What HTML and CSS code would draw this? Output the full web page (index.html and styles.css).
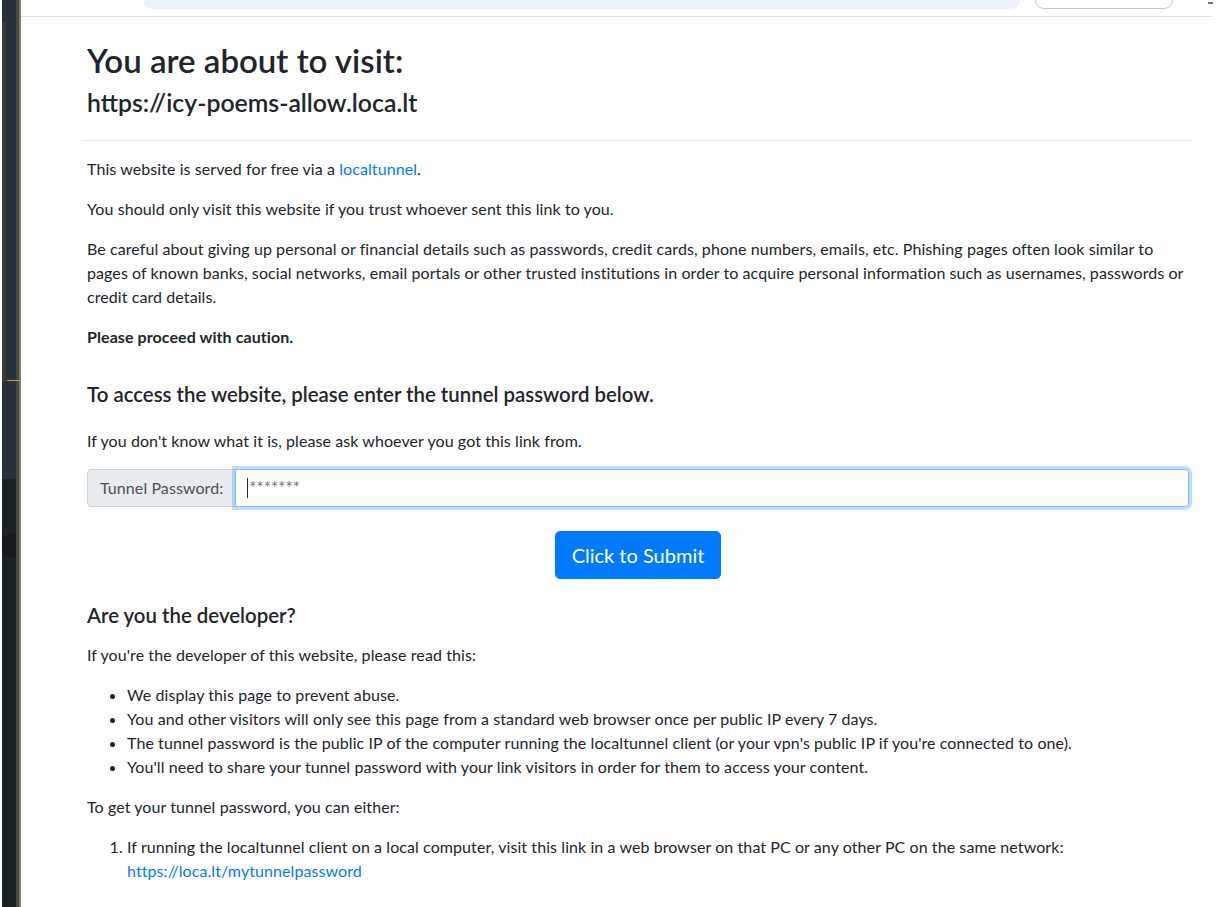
FILE: index.html
```
<!DOCTYPE html>
<html lang="en">
<head>
<meta charset="utf-8">
<title>localtunnel</title>
<link rel="stylesheet" href="styles.css">
</head>
<body>
<div class="window">
  <div class="rail"><span class="rail-tick"></span></div>
  <div class="main">
    <div class="chrome">
      <div class="omnibox"></div>
      <div class="chrome-btn"></div>
      <div class="chrome-spacer"></div>
      <div class="chrome-mark"></div>
    </div>
    <div class="page">
      <h1 class="title">You are about to visit:</h1>
      <h2 class="target">https://icy-poems-allow.loca.lt</h2>
      <hr class="rule">
      <p>This website is served for free via a <a href="#">localtunnel</a>.</p>
      <p>You should only visit this website if you trust whoever sent this link to you.</p>
      <p>Be careful about giving up personal or financial details such as passwords, credit cards, phone numbers, emails, etc. Phishing pages often look similar to pages of known banks, social networks, email portals or other trusted institutions in order to acquire personal information such as usernames, passwords or credit card details.</p>
      <p><b>Please proceed with caution.</b></p>
      <h4 class="section-title first">To access the website, please enter the tunnel password below.</h4>
      <p class="hint">If you don't know what it is, please ask whoever you got this link from.</p>
      <form class="pw-form" action="#" method="post">
        <div class="input-group">
          <span class="input-label">Tunnel Password:</span>
          <span class="input-wrap">
            <input class="pw-input" type="text" name="endpoint" placeholder="*******" autocomplete="off">
            <span class="caret"></span>
          </span>
        </div>
        <div class="submit-row">
          <button class="btn-submit" type="submit">Click to Submit</button>
        </div>
      </form>
      <h4 class="section-title">Are you the developer?</h4>
      <p>If you're the developer of this website, please read this:</p>
      <ul class="facts">
        <li>We display this page to prevent abuse.</li>
        <li>You and other visitors will only see this page from a standard web browser once per public IP every 7 days.</li>
        <li>The tunnel password is the public IP of the computer running the localtunnel client (or your vpn's public IP if you're connected to one).</li>
        <li>You'll need to share your tunnel password with your link visitors in order for them to access your content.</li>
      </ul>
      <p>To get your tunnel password, you can either:</p>
      <ol class="steps">
        <li>If running the localtunnel client on a local computer, visit this link in a web browser on that PC or any other PC on the same network:<br><a href="#">https://loca.lt/mytunnelpassword</a></li>
      </ol>
    </div>
  </div>
</div>
</body>
</html>
```
FILE: styles.css
```
html, body {
  margin: 0;
  padding: 0;
  background: #ffffff;
}

body {
  font-family: Lato, "Liberation Sans", sans-serif;
  font-size: 16px;
  line-height: 1.5;
  letter-spacing: 0.08px;
  color: #212529;
  overflow: hidden;
}

.window {
  display: flex;
  min-height: 907px;
}

/* editor strip on the left edge */
.rail {
  position: relative;
  width: 17px;
  margin-left: 2px;
  flex: none;
  border-right: 2px solid #7b7b7b;
  background: linear-gradient(to bottom,
    #26313b 0, #26313b 479px,
    #1b2226 479px, #1b2226 535px,
    #151b1e 535px, #151b1e 557px,
    #1b2226 557px);
  box-shadow: inset -3px 0 0 0 #4a4a3c;
}

.rail::before {
  content: "";
  position: absolute;
  left: 0;
  top: 22px;
  width: 4px;
  height: 360px;
  background: #3b3d35;
}

.rail-tick {
  position: absolute;
  left: 5px;
  top: 380px;
  width: 12px;
  height: 1px;
  background: #c9a227;
}

.main {
  flex: 1;
  display: flex;
  flex-direction: column;
  min-width: 0;
}

/* browser chrome remnants along the top */
.chrome {
  display: flex;
  align-items: flex-start;
  height: 16px;
  margin-right: 3px;
  padding-left: 122px;
  border-bottom: 1px solid #e2e2e2;
}

.omnibox {
  width: 877px;
  height: 9px;
  background: #edf1fa;
  border-radius: 0 0 14px 14px;
}

.chrome-btn {
  width: 136px;
  height: 8px;
  margin-left: 15px;
  border: 1px solid #c8c8c8;
  border-top: none;
  border-radius: 0 0 14px 14px;
}

.chrome-spacer {
  flex: 1;
}

.chrome-mark {
  width: 5px;
  height: 2px;
  margin-top: 2px;
  background: #5c6bc8;
}

.page {
  padding: 0 27px 0 66px;
}

h1, h2, h4 {
  font-weight: 600;
  line-height: 1.2;
  letter-spacing: 0;
  margin: 0;
}

.title {
  font-size: 33px;
  margin-top: 24px;
}

.target {
  font-size: 24.8px;
  margin-top: 7px;
}

.rule {
  margin: 23px -4px 16px;
  border: 0;
  border-top: 1px solid #e6e6e6;
}

p {
  margin: 0 0 16px;
}

a {
  color: #007bff;
  text-decoration: none;
}

b {
  font-weight: 700;
}

.section-title {
  font-size: 20.4px;
  margin: 0 0 16px;
}

.section-title.first {
  margin-top: 33px;
  margin-bottom: 22px;
}

.pw-form {
  margin: 0 0 24px;
}

.input-group {
  display: flex;
  height: 38px;
}

.input-label {
  display: flex;
  align-items: center;
  padding: 0 12px;
  background: #e9ecef;
  border: 1px solid #ced4da;
  border-radius: 4px 0 0 4px;
  color: #495057;
  white-space: nowrap;
}

.input-wrap {
  position: relative;
  flex: 1;
  display: flex;
}

.pw-input {
  flex: 1;
  min-width: 0;
  height: 38px;
  box-sizing: border-box;
  margin-left: -1px;
  padding: 6px 12px 6px 13px;
  font: inherit;
  font-size: 17px;
  color: #495057;
  background: #ffffff;
  border: 1px solid #80bdff;
  border-radius: 0 4px 4px 0;
  outline: 0;
  box-shadow: 0 0 0 3px rgba(0, 123, 255, 0.25);
}

.pw-input::placeholder {
  color: #6c757d;
  opacity: 1;
}

.caret {
  position: absolute;
  left: 11px;
  top: 9px;
  width: 1px;
  height: 20px;
  background: #212529;
}

.submit-row {
  display: flex;
  justify-content: center;
  margin-top: 24px;
}

.btn-submit {
  font: inherit;
  font-size: 20px;
  line-height: 30px;
  padding: 8px 16px;
  color: #ffffff;
  background: #007bff;
  border: 1px solid #007bff;
  border-radius: 5px;
}

.facts, .steps {
  margin: 0 0 16px;
  padding-left: 40px;
}
```
